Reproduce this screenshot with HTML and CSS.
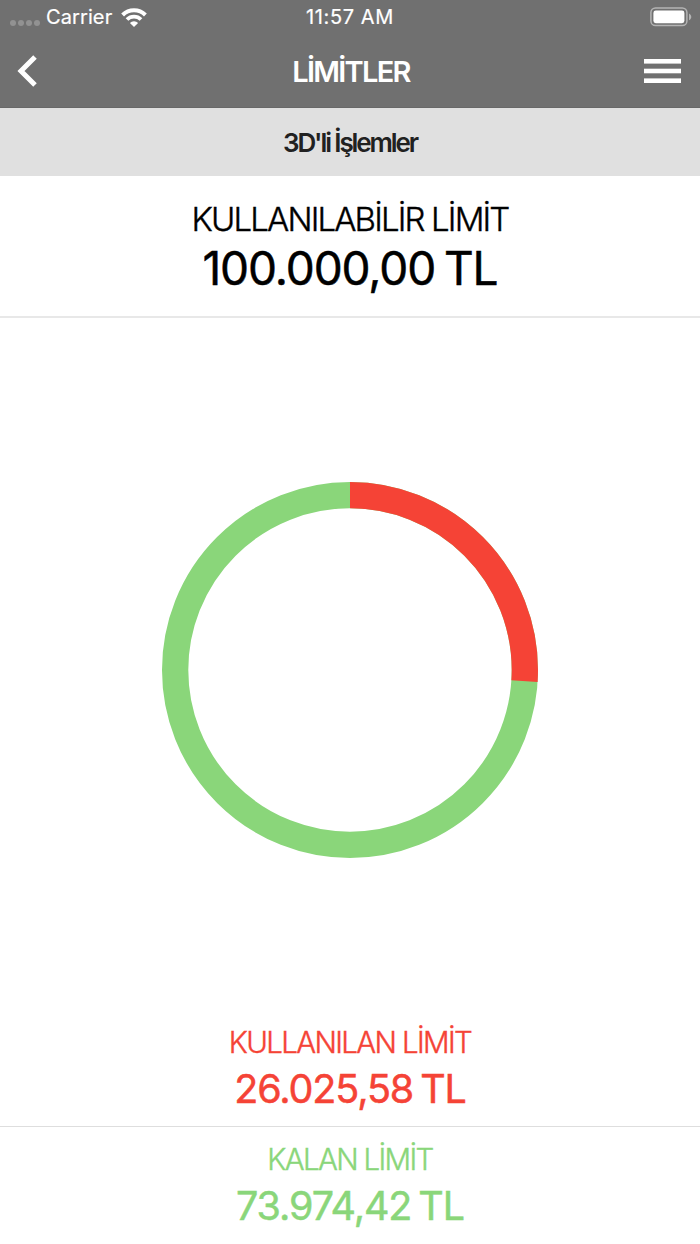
FILE: index.html
```html
<!DOCTYPE html>
<html lang="tr">
<head>
    <meta charset="UTF-8">
    <meta name="viewport" content="width=device-width, initial-scale=1.0">
    <title>Limitler</title>
    <link rel="stylesheet" href="styles.css">
</head>
<body>
    <header class="header">
        <div class="status-bar">
            <div class="carrier">
                <span class="signal"><i></i><i></i><i></i><i></i></span>
                <span class="carrier-name">Carrier</span>
                <svg class="wifi" width="26" height="19" viewBox="0 0 26 19" fill="none" stroke="#fff">
                    <path d="M1.6 7a16.2 16.2 0 0 1 22.8 0" stroke-width="4"/>
                    <path d="M6 11.5a10 10 0 0 1 14 0" stroke-width="3.8"/>
                    <path d="M13 19l-4.1-4.1a5.8 5.8 0 0 1 8.2 0z" fill="#fff" stroke="none"/>
                </svg>
            </div>
            <span class="time">11:57 AM</span>
            <svg class="battery" width="42" height="20" viewBox="0 0 42 20">
                <rect x="0.9" y="1" width="36" height="17.6" rx="4.6" fill="none" stroke="#b4b4b4" stroke-width="1.5"/>
                <rect x="3.4" y="3.6" width="31" height="12.6" rx="2.4" fill="#fff"/>
                <path d="M39 6.4c3 1.4 3 5.4 0 6.8z" fill="#b4b4b4"/>
            </svg>
        </div>
        <nav class="nav-bar">
            <svg class="back" width="20" height="32" viewBox="0 0 20 32">
                <path d="M18 2L4 16L18 30" fill="none" stroke="#fff" stroke-width="5"/>
            </svg>
            <h1>LİMİTLER</h1>
            <svg class="menu" width="37" height="24" viewBox="0 0 37 24" fill="#fff">
                <rect width="37" height="4.6"/>
                <rect y="9.7" width="37" height="4.6"/>
                <rect y="19.4" width="37" height="4.6"/>
            </svg>
        </nav>
    </header>

    <h2 class="subtitle">3D'li İşlemler</h2>

    <section class="limit available">
        <div class="label">KULLANILABİLİR LİMİT</div>
        <div class="amount">100.000,00 TL</div>
    </section>

    <div class="chart">
        <svg width="376" height="376" viewBox="0 0 376 376">
            <circle class="ring ring-left" cx="188" cy="188" r="174.85"/>
            <circle class="ring ring-used" cx="188" cy="188" r="174.85" pathLength="100" stroke-dasharray="26.0256 73.9744" transform="rotate(-90 188 188)"/>
        </svg>
    </div>

    <section class="limit used">
        <div class="label">KULLANILAN LİMİT</div>
        <div class="amount">26.025,58 TL</div>
    </section>

    <section class="limit remaining">
        <div class="label">KALAN LİMİT</div>
        <div class="amount">73.974,42 TL</div>
    </section>
</body>
</html>
```
FILE: styles.css
```css
* {
    box-sizing: border-box;
}

body {
    margin: 0;
    height: 1244px;
    display: flex;
    flex-direction: column;
    font-family: Inter, sans-serif;
    background: #fff;
    color: #000;
}

.header {
    height: 108px;
    background: #707070;
    color: #fff;
    border-bottom: 1px solid #686868;
}

.status-bar {
    display: grid;
    grid-template-columns: 1fr auto 1fr;
    align-items: center;
    height: 34px;
    padding: 0 8px 0 10px;
    font-size: 20px;
    -webkit-text-stroke: 0.2px;
}

.carrier {
    display: flex;
    align-items: center;
}

.signal {
    display: flex;
    gap: 2px;
    margin-top: 12px;
}

.signal i {
    width: 6px;
    height: 6px;
    border-radius: 50%;
    background: #929292;
}

.carrier-name {
    margin: 0 9px 0 6px;
    letter-spacing: 0.1px;
}

.time {
    margin-right: 2px;
    letter-spacing: 0.6px;
}

.battery {
    justify-self: end;
}

.nav-bar {
    display: flex;
    align-items: center;
    justify-content: space-between;
    height: 74px;
    padding: 0 19px 0 17px;
}

.back {
    margin-right: 21px;
}

h1 {
    margin: 0;
    font-size: 29px;
    font-weight: 600;
    letter-spacing: -1.7px;
}

.subtitle {
    margin: 0;
    height: 68px;
    line-height: 69px;
    background: #e0e0e0;
    color: #212121;
    font-size: 26px;
    font-weight: 600;
    letter-spacing: -2.1px;
    text-align: center;
}

.limit {
    text-align: center;
}

.label {
    font-size: 29.5px;
    font-weight: 300;
    line-height: 40px;
    letter-spacing: -1.65px;
    -webkit-text-stroke: 0.4px;
}

.amount {
    font-size: 39.5px;
    font-weight: 400;
    line-height: 54px;
    letter-spacing: -1.1px;
    word-spacing: -3px;
    -webkit-text-stroke: 0.5px;
}

.available {
    height: 142px;
    padding-top: 18px;
    border-bottom: 2px solid #e8e8e8;
}

.available .label {
    font-size: 33px;
    line-height: 50px;
    letter-spacing: -1.85px;
}

.available .amount {
    font-size: 46px;
    line-height: 49px;
}

.chart {
    flex: 1;
    display: flex;
    align-items: center;
    justify-content: center;
}

.ring {
    fill: none;
    stroke-width: 26.3;
}

.ring-left {
    stroke: #8ad67a;
}

.ring-used {
    stroke: #f54336;
}

.used {
    height: 105px;
    color: #f54336;
    border-bottom: 1px solid #dedede;
}

.remaining {
    height: 117px;
    padding-top: 12px;
    color: #8ad67a;
}
```
